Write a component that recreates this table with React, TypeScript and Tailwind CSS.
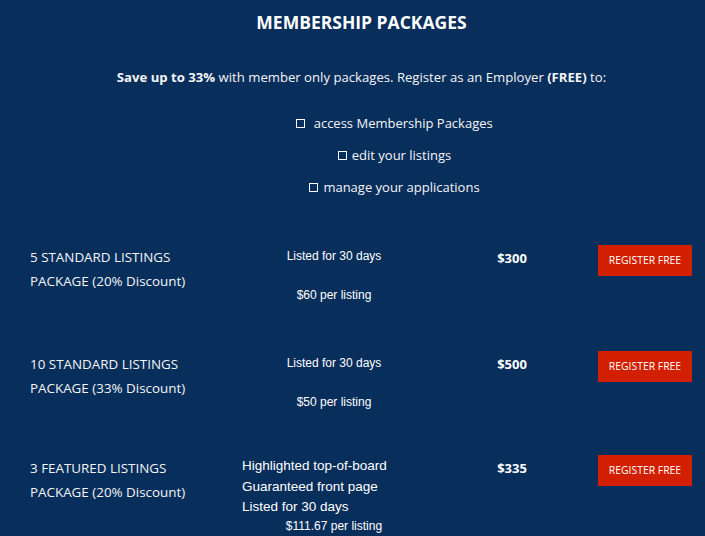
const rows = [
  {
    title: ["5 STANDARD LISTINGS", "PACKAGE (20% Discount)"],
    price: "$300",
    per: "$60 per listing",
    lines: null as string[] | null,
    h: "h-[106px]",
  },
  {
    title: ["10 STANDARD LISTINGS", "PACKAGE (33% Discount)"],
    price: "$500",
    per: "$50 per listing",
    lines: null as string[] | null,
    h: "h-[104px]",
  },
  {
    title: ["3 FEATURED LISTINGS", "PACKAGE (20% Discount)"],
    price: "$335",
    per: "$111.67 per listing",
    lines: ["Highlighted top-of-board", "Guaranteed front page", "Listed for 30 days"],
    h: "h-[104px]",
  },
];

const perks = ["\u00a0access Membership Packages", "edit your listings", "manage your applications"];

function Box() {
  return <span className="inline-block w-[9px] h-[9px] border border-white mr-[5px] relative top-[-1px] align-middle" />;
}

export default function App() {
  return (
    <div className="min-h-[536px] h-[536px] overflow-hidden bg-[#082e5b] text-[#f4f5f7] font-['Open_Sans',sans-serif]">
      <div className="pl-[18px] pt-[10px] text-center">
        <h1 className="text-[17.5px] leading-[24px] font-bold text-white">MEMBERSHIP PACKAGES</h1>
        <p className="mt-[33px] text-[13.15px] leading-[20px]">
          <b>Save up to 33%</b> with member only packages. Register as an Employer <b>(FREE)</b> to:
        </p>
        <ul className="mt-[26px] pl-[66px] flex flex-col gap-[12px] text-[13px] leading-[20px]">
          {perks.map((p) => (
            <li key={p}>
              <Box />
              {p}
            </li>
          ))}
        </ul>
      </div>

      <div className="mt-[47px] pl-[30px]">
        {rows.map((r, i) => (
          <div key={r.price} className={`grid grid-cols-[212px_184px_172px_auto] ${r.h}`}>
            <div className={`${i === 0 ? "pt-[0.5px]" : "pt-[1.5px]"} text-[13.4px] leading-[24.5px]`}>
              <div>{r.title[0]}</div>
              <div>{r.title[1]}</div>
            </div>
            <div className="font-['Liberation_Sans',Arial,sans-serif] text-white">
              {r.lines ? (
                <div className="pt-[2px]">
                  {r.lines.map((l) => (
                    <div key={l} className="text-[13.5px] leading-[20.5px]">{l}</div>
                  ))}
                  <div className="-mt-[1px] text-center text-[12px] leading-[19px]">{r.per}</div>
                </div>
              ) : (
                <div className={`${i === 0 ? "pt-[2px]" : "pt-[3px]"} text-center text-[12px] leading-[20px]`}>
                  <div>Listed for 30 days</div>
                  <div className="mt-[19px]">{r.per}</div>
                </div>
              )}
            </div>
            <div className="pt-[4px] text-center text-[13px] leading-[20px] font-bold text-white">{r.price}</div>
            <div className="pt-[1px]">
              <button className="w-[94px] h-[30.5px] pt-[2px] bg-[#d11f00] text-white text-[10.4px]">
                REGISTER FREE
              </button>
            </div>
          </div>
        ))}
      </div>
    </div>
  );
}
